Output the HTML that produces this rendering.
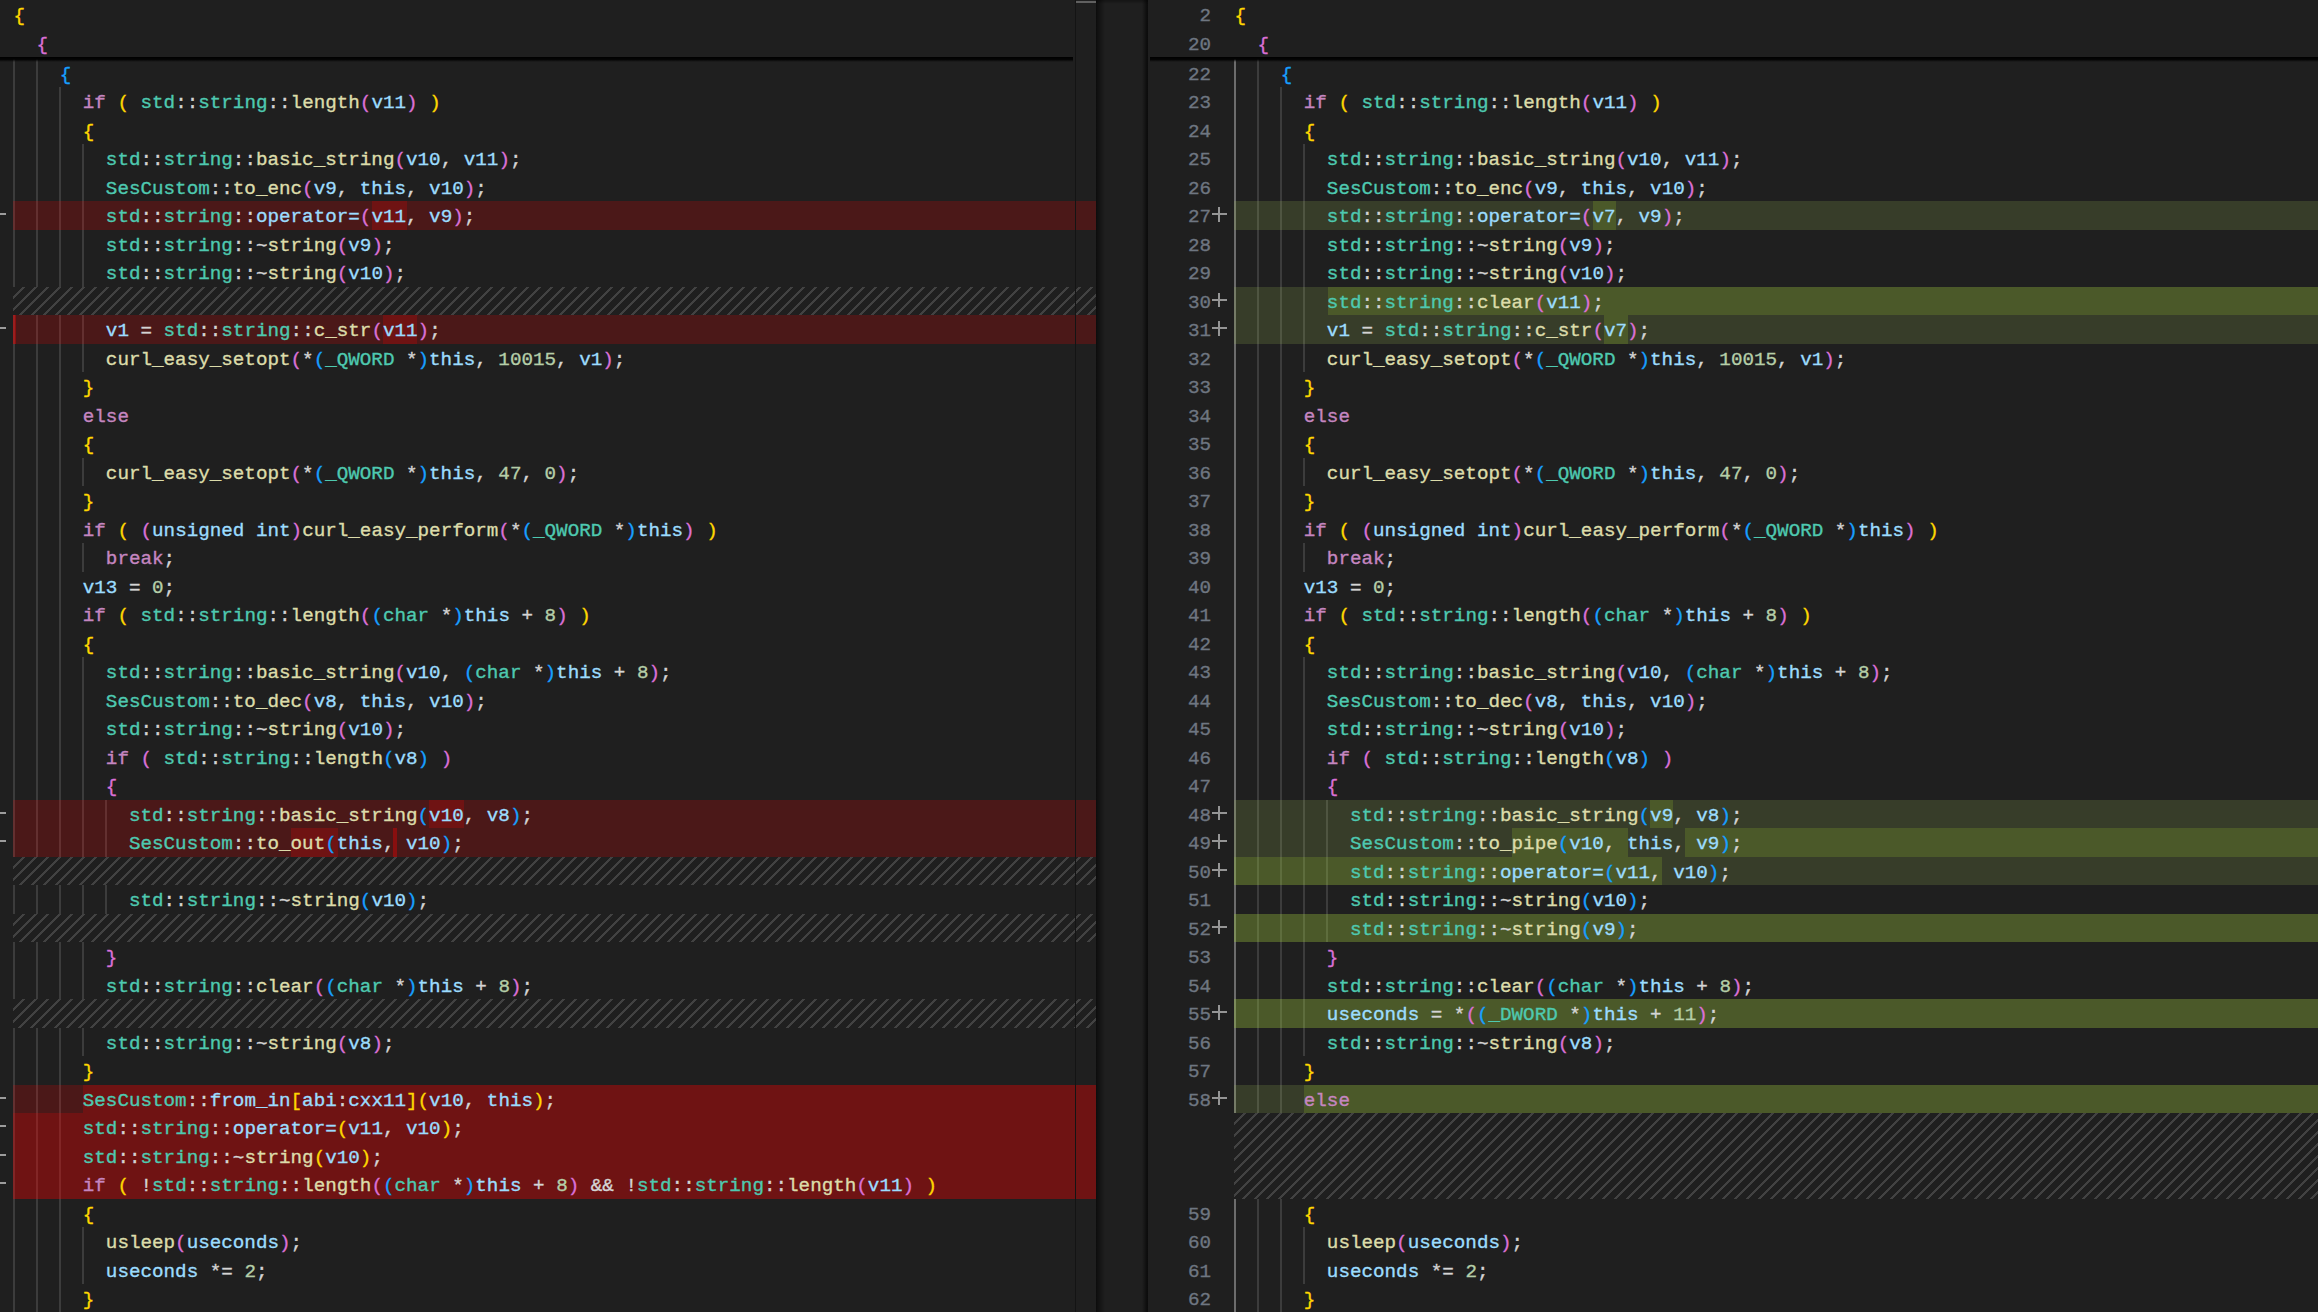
<!DOCTYPE html>
<html><head><meta charset="utf-8"><style>
html,body{margin:0;padding:0;background:#1f1f1f;width:2318px;height:1312px;overflow:hidden;}
body{position:relative;font-family:"Liberation Mono",monospace;}
.g{position:absolute;width:1.5px;height:28.5px;}
.bg{position:absolute;height:28.5px;}
.hatch{position:absolute;height:28.5px;background-image:linear-gradient(-45deg, rgba(204,204,204,0.2) 12.5%, transparent 12.5%, transparent 50%, rgba(204,204,204,0.2) 50%, rgba(204,204,204,0.2) 62.5%, transparent 62.5%, transparent 100%);background-size:12px 12px;}
.ln{position:absolute;height:28.5px;line-height:28.5px;transform:translateY(2px);font-size:19.24px;white-space:pre;color:#D4D4D4;-webkit-text-stroke:0.35px currentColor;}
.num{position:absolute;left:1160px;width:51px;text-align:right;height:28.5px;line-height:28.5px;transform:translateY(2px);font-size:19.24px;color:#6E7681;white-space:pre;-webkit-text-stroke:0.35px currentColor;}
.dash{position:absolute;left:0;width:6px;height:2px;background:#9c9c9c;}
.plus{position:absolute;width:14.5px;height:14.5px;}
.plus .ph{position:absolute;left:0;top:6.2px;width:14.5px;height:2px;background:#959595;}
.plus .pv{position:absolute;left:6.2px;top:0;width:2px;height:14.5px;background:#959595;}
.sticky{position:absolute;top:0;height:57px;background:#1f1f1f;}
.shadow{position:absolute;top:57px;height:5px;background:linear-gradient(#000 0, rgba(0,0,0,0.85) 2.5px, rgba(0,0,0,0) 5px);}
.pane{position:absolute;top:0;height:1312px;overflow:hidden;}
</style></head>
<body>
<div class="pane" style="left:0;width:1096px">
<div class="g" style="left:13.00px;top:58.80px;background:#3c3c3c"></div><div class="g" style="left:36.09px;top:58.80px;background:#3c3c3c"></div><div class="g" style="left:13.00px;top:87.30px;background:#3c3c3c"></div><div class="g" style="left:36.09px;top:87.30px;background:#3c3c3c"></div><div class="g" style="left:59.18px;top:87.30px;background:#3c3c3c"></div><div class="g" style="left:13.00px;top:115.80px;background:#3c3c3c"></div><div class="g" style="left:36.09px;top:115.80px;background:#3c3c3c"></div><div class="g" style="left:59.18px;top:115.80px;background:#3c3c3c"></div><div class="g" style="left:13.00px;top:144.30px;background:#3c3c3c"></div><div class="g" style="left:36.09px;top:144.30px;background:#3c3c3c"></div><div class="g" style="left:59.18px;top:144.30px;background:#3c3c3c"></div><div class="g" style="left:82.28px;top:144.30px;background:#3c3c3c"></div><div class="g" style="left:13.00px;top:172.80px;background:#3c3c3c"></div><div class="g" style="left:36.09px;top:172.80px;background:#3c3c3c"></div><div class="g" style="left:59.18px;top:172.80px;background:#3c3c3c"></div><div class="g" style="left:82.28px;top:172.80px;background:#3c3c3c"></div><div class="g" style="left:13.00px;top:201.30px;background:#3c3c3c"></div><div class="g" style="left:36.09px;top:201.30px;background:#3c3c3c"></div><div class="g" style="left:59.18px;top:201.30px;background:#3c3c3c"></div><div class="g" style="left:82.28px;top:201.30px;background:#3c3c3c"></div><div class="g" style="left:13.00px;top:229.80px;background:#3c3c3c"></div><div class="g" style="left:36.09px;top:229.80px;background:#3c3c3c"></div><div class="g" style="left:59.18px;top:229.80px;background:#3c3c3c"></div><div class="g" style="left:82.28px;top:229.80px;background:#3c3c3c"></div><div class="g" style="left:13.00px;top:258.30px;background:#3c3c3c"></div><div class="g" style="left:36.09px;top:258.30px;background:#3c3c3c"></div><div class="g" style="left:59.18px;top:258.30px;background:#3c3c3c"></div><div class="g" style="left:82.28px;top:258.30px;background:#3c3c3c"></div><div class="g" style="left:13.00px;top:315.30px;background:#3c3c3c"></div><div class="g" style="left:36.09px;top:315.30px;background:#3c3c3c"></div><div class="g" style="left:59.18px;top:315.30px;background:#3c3c3c"></div><div class="g" style="left:82.28px;top:315.30px;background:#3c3c3c"></div><div class="g" style="left:13.00px;top:343.80px;background:#3c3c3c"></div><div class="g" style="left:36.09px;top:343.80px;background:#3c3c3c"></div><div class="g" style="left:59.18px;top:343.80px;background:#3c3c3c"></div><div class="g" style="left:82.28px;top:343.80px;background:#3c3c3c"></div><div class="g" style="left:13.00px;top:372.30px;background:#3c3c3c"></div><div class="g" style="left:36.09px;top:372.30px;background:#3c3c3c"></div><div class="g" style="left:59.18px;top:372.30px;background:#3c3c3c"></div><div class="g" style="left:13.00px;top:400.80px;background:#3c3c3c"></div><div class="g" style="left:36.09px;top:400.80px;background:#3c3c3c"></div><div class="g" style="left:59.18px;top:400.80px;background:#3c3c3c"></div><div class="g" style="left:13.00px;top:429.30px;background:#3c3c3c"></div><div class="g" style="left:36.09px;top:429.30px;background:#3c3c3c"></div><div class="g" style="left:59.18px;top:429.30px;background:#3c3c3c"></div><div class="g" style="left:13.00px;top:457.80px;background:#3c3c3c"></div><div class="g" style="left:36.09px;top:457.80px;background:#3c3c3c"></div><div class="g" style="left:59.18px;top:457.80px;background:#3c3c3c"></div><div class="g" style="left:82.28px;top:457.80px;background:#3c3c3c"></div><div class="g" style="left:13.00px;top:486.30px;background:#3c3c3c"></div><div class="g" style="left:36.09px;top:486.30px;background:#3c3c3c"></div><div class="g" style="left:59.18px;top:486.30px;background:#3c3c3c"></div><div class="g" style="left:13.00px;top:514.80px;background:#3c3c3c"></div><div class="g" style="left:36.09px;top:514.80px;background:#3c3c3c"></div><div class="g" style="left:59.18px;top:514.80px;background:#3c3c3c"></div><div class="g" style="left:13.00px;top:543.30px;background:#3c3c3c"></div><div class="g" style="left:36.09px;top:543.30px;background:#3c3c3c"></div><div class="g" style="left:59.18px;top:543.30px;background:#3c3c3c"></div><div class="g" style="left:82.28px;top:543.30px;background:#3c3c3c"></div><div class="g" style="left:13.00px;top:571.80px;background:#3c3c3c"></div><div class="g" style="left:36.09px;top:571.80px;background:#3c3c3c"></div><div class="g" style="left:59.18px;top:571.80px;background:#3c3c3c"></div><div class="g" style="left:13.00px;top:600.30px;background:#3c3c3c"></div><div class="g" style="left:36.09px;top:600.30px;background:#3c3c3c"></div><div class="g" style="left:59.18px;top:600.30px;background:#3c3c3c"></div><div class="g" style="left:13.00px;top:628.80px;background:#3c3c3c"></div><div class="g" style="left:36.09px;top:628.80px;background:#3c3c3c"></div><div class="g" style="left:59.18px;top:628.80px;background:#3c3c3c"></div><div class="g" style="left:13.00px;top:657.30px;background:#3c3c3c"></div><div class="g" style="left:36.09px;top:657.30px;background:#3c3c3c"></div><div class="g" style="left:59.18px;top:657.30px;background:#3c3c3c"></div><div class="g" style="left:82.28px;top:657.30px;background:#3c3c3c"></div><div class="g" style="left:13.00px;top:685.80px;background:#3c3c3c"></div><div class="g" style="left:36.09px;top:685.80px;background:#3c3c3c"></div><div class="g" style="left:59.18px;top:685.80px;background:#3c3c3c"></div><div class="g" style="left:82.28px;top:685.80px;background:#3c3c3c"></div><div class="g" style="left:13.00px;top:714.30px;background:#3c3c3c"></div><div class="g" style="left:36.09px;top:714.30px;background:#3c3c3c"></div><div class="g" style="left:59.18px;top:714.30px;background:#3c3c3c"></div><div class="g" style="left:82.28px;top:714.30px;background:#3c3c3c"></div><div class="g" style="left:13.00px;top:742.80px;background:#3c3c3c"></div><div class="g" style="left:36.09px;top:742.80px;background:#3c3c3c"></div><div class="g" style="left:59.18px;top:742.80px;background:#3c3c3c"></div><div class="g" style="left:82.28px;top:742.80px;background:#3c3c3c"></div><div class="g" style="left:13.00px;top:771.30px;background:#3c3c3c"></div><div class="g" style="left:36.09px;top:771.30px;background:#3c3c3c"></div><div class="g" style="left:59.18px;top:771.30px;background:#3c3c3c"></div><div class="g" style="left:82.28px;top:771.30px;background:#3c3c3c"></div><div class="g" style="left:13.00px;top:799.80px;background:#3c3c3c"></div><div class="g" style="left:36.09px;top:799.80px;background:#3c3c3c"></div><div class="g" style="left:59.18px;top:799.80px;background:#3c3c3c"></div><div class="g" style="left:82.28px;top:799.80px;background:#3c3c3c"></div><div class="g" style="left:105.37px;top:799.80px;background:#3c3c3c"></div><div class="g" style="left:13.00px;top:828.30px;background:#3c3c3c"></div><div class="g" style="left:36.09px;top:828.30px;background:#3c3c3c"></div><div class="g" style="left:59.18px;top:828.30px;background:#3c3c3c"></div><div class="g" style="left:82.28px;top:828.30px;background:#3c3c3c"></div><div class="g" style="left:105.37px;top:828.30px;background:#3c3c3c"></div><div class="g" style="left:13.00px;top:885.30px;background:#3c3c3c"></div><div class="g" style="left:36.09px;top:885.30px;background:#3c3c3c"></div><div class="g" style="left:59.18px;top:885.30px;background:#3c3c3c"></div><div class="g" style="left:82.28px;top:885.30px;background:#3c3c3c"></div><div class="g" style="left:105.37px;top:885.30px;background:#3c3c3c"></div><div class="g" style="left:13.00px;top:942.30px;background:#3c3c3c"></div><div class="g" style="left:36.09px;top:942.30px;background:#3c3c3c"></div><div class="g" style="left:59.18px;top:942.30px;background:#3c3c3c"></div><div class="g" style="left:82.28px;top:942.30px;background:#3c3c3c"></div><div class="g" style="left:13.00px;top:970.80px;background:#3c3c3c"></div><div class="g" style="left:36.09px;top:970.80px;background:#3c3c3c"></div><div class="g" style="left:59.18px;top:970.80px;background:#3c3c3c"></div><div class="g" style="left:82.28px;top:970.80px;background:#3c3c3c"></div><div class="g" style="left:13.00px;top:1027.80px;background:#3c3c3c"></div><div class="g" style="left:36.09px;top:1027.80px;background:#3c3c3c"></div><div class="g" style="left:59.18px;top:1027.80px;background:#3c3c3c"></div><div class="g" style="left:82.28px;top:1027.80px;background:#3c3c3c"></div><div class="g" style="left:13.00px;top:1056.30px;background:#3c3c3c"></div><div class="g" style="left:36.09px;top:1056.30px;background:#3c3c3c"></div><div class="g" style="left:59.18px;top:1056.30px;background:#3c3c3c"></div><div class="g" style="left:13.00px;top:1084.80px;background:#3c3c3c"></div><div class="g" style="left:36.09px;top:1084.80px;background:#3c3c3c"></div><div class="g" style="left:59.18px;top:1084.80px;background:#3c3c3c"></div><div class="g" style="left:13.00px;top:1113.30px;background:#3c3c3c"></div><div class="g" style="left:36.09px;top:1113.30px;background:#3c3c3c"></div><div class="g" style="left:59.18px;top:1113.30px;background:#3c3c3c"></div><div class="g" style="left:13.00px;top:1141.80px;background:#3c3c3c"></div><div class="g" style="left:36.09px;top:1141.80px;background:#3c3c3c"></div><div class="g" style="left:59.18px;top:1141.80px;background:#3c3c3c"></div><div class="g" style="left:13.00px;top:1170.30px;background:#3c3c3c"></div><div class="g" style="left:36.09px;top:1170.30px;background:#3c3c3c"></div><div class="g" style="left:59.18px;top:1170.30px;background:#3c3c3c"></div><div class="g" style="left:13.00px;top:1198.80px;background:#3c3c3c"></div><div class="g" style="left:36.09px;top:1198.80px;background:#3c3c3c"></div><div class="g" style="left:59.18px;top:1198.80px;background:#3c3c3c"></div><div class="g" style="left:13.00px;top:1227.30px;background:#3c3c3c"></div><div class="g" style="left:36.09px;top:1227.30px;background:#3c3c3c"></div><div class="g" style="left:59.18px;top:1227.30px;background:#3c3c3c"></div><div class="g" style="left:82.28px;top:1227.30px;background:#3c3c3c"></div><div class="g" style="left:13.00px;top:1255.80px;background:#3c3c3c"></div><div class="g" style="left:36.09px;top:1255.80px;background:#3c3c3c"></div><div class="g" style="left:59.18px;top:1255.80px;background:#3c3c3c"></div><div class="g" style="left:82.28px;top:1255.80px;background:#3c3c3c"></div><div class="g" style="left:13.00px;top:1284.30px;background:#3c3c3c"></div><div class="g" style="left:36.09px;top:1284.30px;background:#3c3c3c"></div><div class="g" style="left:59.18px;top:1284.30px;background:#3c3c3c"></div><div class="bg" style="left:13px;top:201.30px;width:1083px;background:rgba(255,0,0,0.2)"></div><div class="bg" style="left:13px;top:315.30px;width:1083px;background:rgba(255,0,0,0.2)"></div><div class="bg" style="left:13px;top:799.80px;width:1083px;background:rgba(255,0,0,0.2)"></div><div class="bg" style="left:13px;top:828.30px;width:1083px;background:rgba(255,0,0,0.2)"></div><div class="bg" style="left:13px;top:1084.80px;width:1083px;background:rgba(255,0,0,0.2)"></div><div class="bg" style="left:13px;top:1113.30px;width:1083px;background:rgba(255,0,0,0.2)"></div><div class="bg" style="left:13px;top:1141.80px;width:1083px;background:rgba(255,0,0,0.2)"></div><div class="bg" style="left:13px;top:1170.30px;width:1083px;background:rgba(255,0,0,0.2)"></div><div class="bg" style="left:372.00px;top:201.30px;width:34.50px;background:rgba(255,0,0,0.2)"></div><div class="bg" style="left:382.50px;top:315.30px;width:34.50px;background:rgba(255,0,0,0.2)"></div><div class="bg" style="left:429.00px;top:799.80px;width:34.50px;background:rgba(255,0,0,0.2)"></div><div class="bg" style="left:291.00px;top:828.30px;width:46.50px;background:rgba(255,0,0,0.2)"></div><div class="bg" style="left:82.50px;top:1084.80px;width:1013.50px;background:rgba(255,0,0,0.2)"></div><div class="bg" style="left:13.00px;top:1113.30px;width:1083.00px;background:rgba(255,0,0,0.2)"></div><div class="bg" style="left:13.00px;top:1141.80px;width:1083.00px;background:rgba(255,0,0,0.2)"></div><div class="bg" style="left:13.00px;top:1170.30px;width:1083.00px;background:rgba(255,0,0,0.2)"></div><div class="bg" style="left:13.00px;top:315.30px;width:2.50px;background:rgba(255,0,0,0.35)"></div><div class="bg" style="left:392.52px;top:828.30px;width:4.00px;background:rgba(255,0,0,0.35)"></div><div class="hatch" style="left:13px;top:286.80px;width:1083px;height:28.50px"></div><div class="hatch" style="left:13px;top:856.80px;width:1083px;height:28.50px"></div><div class="hatch" style="left:13px;top:913.80px;width:1083px;height:28.50px"></div><div class="hatch" style="left:13px;top:999.30px;width:1083px;height:28.50px"></div><div class="ln" style="left:13.50px;top:58.80px">    <span style="color:#179FFF">{</span></div><div class="ln" style="left:13.50px;top:87.30px">      <span style="color:#C586C0">if</span> <span style="color:#FFD700">(</span> <span style="color:#4EC9B0">std</span><span style="color:#D4D4D4">:</span><span style="color:#D4D4D4">:</span><span style="color:#4EC9B0">string</span><span style="color:#D4D4D4">:</span><span style="color:#D4D4D4">:</span><span style="color:#DCDCAA">length</span><span style="color:#DA70D6">(</span><span style="color:#9CDCFE">v11</span><span style="color:#DA70D6">)</span> <span style="color:#FFD700">)</span></div><div class="ln" style="left:13.50px;top:115.80px">      <span style="color:#FFD700">{</span></div><div class="ln" style="left:13.50px;top:144.30px">        <span style="color:#4EC9B0">std</span><span style="color:#D4D4D4">:</span><span style="color:#D4D4D4">:</span><span style="color:#4EC9B0">string</span><span style="color:#D4D4D4">:</span><span style="color:#D4D4D4">:</span><span style="color:#DCDCAA">basic_string</span><span style="color:#DA70D6">(</span><span style="color:#9CDCFE">v10</span><span style="color:#D4D4D4">,</span> <span style="color:#9CDCFE">v11</span><span style="color:#DA70D6">)</span><span style="color:#D4D4D4">;</span></div><div class="ln" style="left:13.50px;top:172.80px">        <span style="color:#4EC9B0">SesCustom</span><span style="color:#D4D4D4">:</span><span style="color:#D4D4D4">:</span><span style="color:#DCDCAA">to_enc</span><span style="color:#DA70D6">(</span><span style="color:#9CDCFE">v9</span><span style="color:#D4D4D4">,</span> <span style="color:#9CDCFE">this</span><span style="color:#D4D4D4">,</span> <span style="color:#9CDCFE">v10</span><span style="color:#DA70D6">)</span><span style="color:#D4D4D4">;</span></div><div class="ln" style="left:13.50px;top:201.30px">        <span style="color:#4EC9B0">std</span><span style="color:#D4D4D4">:</span><span style="color:#D4D4D4">:</span><span style="color:#4EC9B0">string</span><span style="color:#D4D4D4">:</span><span style="color:#D4D4D4">:</span><span style="color:#9CDCFE">operator=</span><span style="color:#DA70D6">(</span><span style="color:#9CDCFE">v11</span><span style="color:#D4D4D4">,</span> <span style="color:#9CDCFE">v9</span><span style="color:#DA70D6">)</span><span style="color:#D4D4D4">;</span></div><div class="ln" style="left:13.50px;top:229.80px">        <span style="color:#4EC9B0">std</span><span style="color:#D4D4D4">:</span><span style="color:#D4D4D4">:</span><span style="color:#4EC9B0">string</span><span style="color:#D4D4D4">:</span><span style="color:#D4D4D4">:</span><span style="color:#D4D4D4">~</span><span style="color:#DCDCAA">string</span><span style="color:#DA70D6">(</span><span style="color:#9CDCFE">v9</span><span style="color:#DA70D6">)</span><span style="color:#D4D4D4">;</span></div><div class="ln" style="left:13.50px;top:258.30px">        <span style="color:#4EC9B0">std</span><span style="color:#D4D4D4">:</span><span style="color:#D4D4D4">:</span><span style="color:#4EC9B0">string</span><span style="color:#D4D4D4">:</span><span style="color:#D4D4D4">:</span><span style="color:#D4D4D4">~</span><span style="color:#DCDCAA">string</span><span style="color:#DA70D6">(</span><span style="color:#9CDCFE">v10</span><span style="color:#DA70D6">)</span><span style="color:#D4D4D4">;</span></div><div class="ln" style="left:13.50px;top:315.30px">        <span style="color:#9CDCFE">v1</span> <span style="color:#D4D4D4">=</span> <span style="color:#4EC9B0">std</span><span style="color:#D4D4D4">:</span><span style="color:#D4D4D4">:</span><span style="color:#4EC9B0">string</span><span style="color:#D4D4D4">:</span><span style="color:#D4D4D4">:</span><span style="color:#DCDCAA">c_str</span><span style="color:#DA70D6">(</span><span style="color:#9CDCFE">v11</span><span style="color:#DA70D6">)</span><span style="color:#D4D4D4">;</span></div><div class="ln" style="left:13.50px;top:343.80px">        <span style="color:#DCDCAA">curl_easy_setopt</span><span style="color:#DA70D6">(</span><span style="color:#D4D4D4">*</span><span style="color:#179FFF">(</span><span style="color:#4EC9B0">_QWORD</span> <span style="color:#D4D4D4">*</span><span style="color:#179FFF">)</span><span style="color:#9CDCFE">this</span><span style="color:#D4D4D4">,</span> <span style="color:#B5CEA8">10015</span><span style="color:#D4D4D4">,</span> <span style="color:#9CDCFE">v1</span><span style="color:#DA70D6">)</span><span style="color:#D4D4D4">;</span></div><div class="ln" style="left:13.50px;top:372.30px">      <span style="color:#FFD700">}</span></div><div class="ln" style="left:13.50px;top:400.80px">      <span style="color:#C586C0">else</span></div><div class="ln" style="left:13.50px;top:429.30px">      <span style="color:#FFD700">{</span></div><div class="ln" style="left:13.50px;top:457.80px">        <span style="color:#DCDCAA">curl_easy_setopt</span><span style="color:#DA70D6">(</span><span style="color:#D4D4D4">*</span><span style="color:#179FFF">(</span><span style="color:#4EC9B0">_QWORD</span> <span style="color:#D4D4D4">*</span><span style="color:#179FFF">)</span><span style="color:#9CDCFE">this</span><span style="color:#D4D4D4">,</span> <span style="color:#B5CEA8">47</span><span style="color:#D4D4D4">,</span> <span style="color:#B5CEA8">0</span><span style="color:#DA70D6">)</span><span style="color:#D4D4D4">;</span></div><div class="ln" style="left:13.50px;top:486.30px">      <span style="color:#FFD700">}</span></div><div class="ln" style="left:13.50px;top:514.80px">      <span style="color:#C586C0">if</span> <span style="color:#FFD700">(</span> <span style="color:#DA70D6">(</span><span style="color:#9CDCFE">unsigned</span> <span style="color:#9CDCFE">int</span><span style="color:#DA70D6">)</span><span style="color:#DCDCAA">curl_easy_perform</span><span style="color:#DA70D6">(</span><span style="color:#D4D4D4">*</span><span style="color:#179FFF">(</span><span style="color:#4EC9B0">_QWORD</span> <span style="color:#D4D4D4">*</span><span style="color:#179FFF">)</span><span style="color:#9CDCFE">this</span><span style="color:#DA70D6">)</span> <span style="color:#FFD700">)</span></div><div class="ln" style="left:13.50px;top:543.30px">        <span style="color:#C586C0">break</span><span style="color:#D4D4D4">;</span></div><div class="ln" style="left:13.50px;top:571.80px">      <span style="color:#9CDCFE">v13</span> <span style="color:#D4D4D4">=</span> <span style="color:#B5CEA8">0</span><span style="color:#D4D4D4">;</span></div><div class="ln" style="left:13.50px;top:600.30px">      <span style="color:#C586C0">if</span> <span style="color:#FFD700">(</span> <span style="color:#4EC9B0">std</span><span style="color:#D4D4D4">:</span><span style="color:#D4D4D4">:</span><span style="color:#4EC9B0">string</span><span style="color:#D4D4D4">:</span><span style="color:#D4D4D4">:</span><span style="color:#DCDCAA">length</span><span style="color:#DA70D6">(</span><span style="color:#179FFF">(</span><span style="color:#4EC9B0">char</span> <span style="color:#D4D4D4">*</span><span style="color:#179FFF">)</span><span style="color:#9CDCFE">this</span> <span style="color:#D4D4D4">+</span> <span style="color:#B5CEA8">8</span><span style="color:#DA70D6">)</span> <span style="color:#FFD700">)</span></div><div class="ln" style="left:13.50px;top:628.80px">      <span style="color:#FFD700">{</span></div><div class="ln" style="left:13.50px;top:657.30px">        <span style="color:#4EC9B0">std</span><span style="color:#D4D4D4">:</span><span style="color:#D4D4D4">:</span><span style="color:#4EC9B0">string</span><span style="color:#D4D4D4">:</span><span style="color:#D4D4D4">:</span><span style="color:#DCDCAA">basic_string</span><span style="color:#DA70D6">(</span><span style="color:#9CDCFE">v10</span><span style="color:#D4D4D4">,</span> <span style="color:#179FFF">(</span><span style="color:#4EC9B0">char</span> <span style="color:#D4D4D4">*</span><span style="color:#179FFF">)</span><span style="color:#9CDCFE">this</span> <span style="color:#D4D4D4">+</span> <span style="color:#B5CEA8">8</span><span style="color:#DA70D6">)</span><span style="color:#D4D4D4">;</span></div><div class="ln" style="left:13.50px;top:685.80px">        <span style="color:#4EC9B0">SesCustom</span><span style="color:#D4D4D4">:</span><span style="color:#D4D4D4">:</span><span style="color:#DCDCAA">to_dec</span><span style="color:#DA70D6">(</span><span style="color:#9CDCFE">v8</span><span style="color:#D4D4D4">,</span> <span style="color:#9CDCFE">this</span><span style="color:#D4D4D4">,</span> <span style="color:#9CDCFE">v10</span><span style="color:#DA70D6">)</span><span style="color:#D4D4D4">;</span></div><div class="ln" style="left:13.50px;top:714.30px">        <span style="color:#4EC9B0">std</span><span style="color:#D4D4D4">:</span><span style="color:#D4D4D4">:</span><span style="color:#4EC9B0">string</span><span style="color:#D4D4D4">:</span><span style="color:#D4D4D4">:</span><span style="color:#D4D4D4">~</span><span style="color:#DCDCAA">string</span><span style="color:#DA70D6">(</span><span style="color:#9CDCFE">v10</span><span style="color:#DA70D6">)</span><span style="color:#D4D4D4">;</span></div><div class="ln" style="left:13.50px;top:742.80px">        <span style="color:#C586C0">if</span> <span style="color:#DA70D6">(</span> <span style="color:#4EC9B0">std</span><span style="color:#D4D4D4">:</span><span style="color:#D4D4D4">:</span><span style="color:#4EC9B0">string</span><span style="color:#D4D4D4">:</span><span style="color:#D4D4D4">:</span><span style="color:#DCDCAA">length</span><span style="color:#179FFF">(</span><span style="color:#9CDCFE">v8</span><span style="color:#179FFF">)</span> <span style="color:#DA70D6">)</span></div><div class="ln" style="left:13.50px;top:771.30px">        <span style="color:#DA70D6">{</span></div><div class="ln" style="left:13.50px;top:799.80px">          <span style="color:#4EC9B0">std</span><span style="color:#D4D4D4">:</span><span style="color:#D4D4D4">:</span><span style="color:#4EC9B0">string</span><span style="color:#D4D4D4">:</span><span style="color:#D4D4D4">:</span><span style="color:#DCDCAA">basic_string</span><span style="color:#179FFF">(</span><span style="color:#9CDCFE">v10</span><span style="color:#D4D4D4">,</span> <span style="color:#9CDCFE">v8</span><span style="color:#179FFF">)</span><span style="color:#D4D4D4">;</span></div><div class="ln" style="left:13.50px;top:828.30px">          <span style="color:#4EC9B0">SesCustom</span><span style="color:#D4D4D4">:</span><span style="color:#D4D4D4">:</span><span style="color:#DCDCAA">to_out</span><span style="color:#179FFF">(</span><span style="color:#9CDCFE">this</span><span style="color:#D4D4D4">,</span> <span style="color:#9CDCFE">v10</span><span style="color:#179FFF">)</span><span style="color:#D4D4D4">;</span></div><div class="ln" style="left:13.50px;top:885.30px">          <span style="color:#4EC9B0">std</span><span style="color:#D4D4D4">:</span><span style="color:#D4D4D4">:</span><span style="color:#4EC9B0">string</span><span style="color:#D4D4D4">:</span><span style="color:#D4D4D4">:</span><span style="color:#D4D4D4">~</span><span style="color:#DCDCAA">string</span><span style="color:#179FFF">(</span><span style="color:#9CDCFE">v10</span><span style="color:#179FFF">)</span><span style="color:#D4D4D4">;</span></div><div class="ln" style="left:13.50px;top:942.30px">        <span style="color:#DA70D6">}</span></div><div class="ln" style="left:13.50px;top:970.80px">        <span style="color:#4EC9B0">std</span><span style="color:#D4D4D4">:</span><span style="color:#D4D4D4">:</span><span style="color:#4EC9B0">string</span><span style="color:#D4D4D4">:</span><span style="color:#D4D4D4">:</span><span style="color:#DCDCAA">clear</span><span style="color:#DA70D6">(</span><span style="color:#179FFF">(</span><span style="color:#4EC9B0">char</span> <span style="color:#D4D4D4">*</span><span style="color:#179FFF">)</span><span style="color:#9CDCFE">this</span> <span style="color:#D4D4D4">+</span> <span style="color:#B5CEA8">8</span><span style="color:#DA70D6">)</span><span style="color:#D4D4D4">;</span></div><div class="ln" style="left:13.50px;top:1027.80px">        <span style="color:#4EC9B0">std</span><span style="color:#D4D4D4">:</span><span style="color:#D4D4D4">:</span><span style="color:#4EC9B0">string</span><span style="color:#D4D4D4">:</span><span style="color:#D4D4D4">:</span><span style="color:#D4D4D4">~</span><span style="color:#DCDCAA">string</span><span style="color:#DA70D6">(</span><span style="color:#9CDCFE">v8</span><span style="color:#DA70D6">)</span><span style="color:#D4D4D4">;</span></div><div class="ln" style="left:13.50px;top:1056.30px">      <span style="color:#FFD700">}</span></div><div class="ln" style="left:13.50px;top:1084.80px">      <span style="color:#4EC9B0">SesCustom</span><span style="color:#D4D4D4">:</span><span style="color:#D4D4D4">:</span><span style="color:#9CDCFE">from_in</span><span style="color:#FFD700">[</span><span style="color:#9CDCFE">abi</span><span style="color:#D4D4D4">:</span><span style="color:#9CDCFE">cxx11</span><span style="color:#FFD700">]</span><span style="color:#FFD700">(</span><span style="color:#9CDCFE">v10</span><span style="color:#D4D4D4">,</span> <span style="color:#9CDCFE">this</span><span style="color:#FFD700">)</span><span style="color:#D4D4D4">;</span></div><div class="ln" style="left:13.50px;top:1113.30px">      <span style="color:#4EC9B0">std</span><span style="color:#D4D4D4">:</span><span style="color:#D4D4D4">:</span><span style="color:#4EC9B0">string</span><span style="color:#D4D4D4">:</span><span style="color:#D4D4D4">:</span><span style="color:#9CDCFE">operator=</span><span style="color:#FFD700">(</span><span style="color:#9CDCFE">v11</span><span style="color:#D4D4D4">,</span> <span style="color:#9CDCFE">v10</span><span style="color:#FFD700">)</span><span style="color:#D4D4D4">;</span></div><div class="ln" style="left:13.50px;top:1141.80px">      <span style="color:#4EC9B0">std</span><span style="color:#D4D4D4">:</span><span style="color:#D4D4D4">:</span><span style="color:#4EC9B0">string</span><span style="color:#D4D4D4">:</span><span style="color:#D4D4D4">:</span><span style="color:#D4D4D4">~</span><span style="color:#DCDCAA">string</span><span style="color:#FFD700">(</span><span style="color:#9CDCFE">v10</span><span style="color:#FFD700">)</span><span style="color:#D4D4D4">;</span></div><div class="ln" style="left:13.50px;top:1170.30px">      <span style="color:#C586C0">if</span> <span style="color:#FFD700">(</span> <span style="color:#D4D4D4">!</span><span style="color:#4EC9B0">std</span><span style="color:#D4D4D4">:</span><span style="color:#D4D4D4">:</span><span style="color:#4EC9B0">string</span><span style="color:#D4D4D4">:</span><span style="color:#D4D4D4">:</span><span style="color:#DCDCAA">length</span><span style="color:#DA70D6">(</span><span style="color:#179FFF">(</span><span style="color:#4EC9B0">char</span> <span style="color:#D4D4D4">*</span><span style="color:#179FFF">)</span><span style="color:#9CDCFE">this</span> <span style="color:#D4D4D4">+</span> <span style="color:#B5CEA8">8</span><span style="color:#DA70D6">)</span> <span style="color:#D4D4D4">&amp;</span><span style="color:#D4D4D4">&amp;</span> <span style="color:#D4D4D4">!</span><span style="color:#4EC9B0">std</span><span style="color:#D4D4D4">:</span><span style="color:#D4D4D4">:</span><span style="color:#4EC9B0">string</span><span style="color:#D4D4D4">:</span><span style="color:#D4D4D4">:</span><span style="color:#DCDCAA">length</span><span style="color:#DA70D6">(</span><span style="color:#9CDCFE">v11</span><span style="color:#DA70D6">)</span> <span style="color:#FFD700">)</span></div><div class="ln" style="left:13.50px;top:1198.80px">      <span style="color:#FFD700">{</span></div><div class="ln" style="left:13.50px;top:1227.30px">        <span style="color:#DCDCAA">usleep</span><span style="color:#DA70D6">(</span><span style="color:#9CDCFE">useconds</span><span style="color:#DA70D6">)</span><span style="color:#D4D4D4">;</span></div><div class="ln" style="left:13.50px;top:1255.80px">        <span style="color:#9CDCFE">useconds</span> <span style="color:#D4D4D4">*</span><span style="color:#D4D4D4">=</span> <span style="color:#B5CEA8">2</span><span style="color:#D4D4D4">;</span></div><div class="ln" style="left:13.50px;top:1284.30px">      <span style="color:#FFD700">}</span></div>
</div>
<div class="pane" style="left:1148px;width:1170px">
<div style="position:absolute;left:-1148px;top:0;width:2318px;height:1312px">
<div class="g" style="left:1234.00px;top:58.80px;background:#6c6c6c"></div><div class="g" style="left:1257.09px;top:58.80px;background:#3c3c3c"></div><div class="g" style="left:1234.00px;top:87.30px;background:#6c6c6c"></div><div class="g" style="left:1257.09px;top:87.30px;background:#3c3c3c"></div><div class="g" style="left:1280.18px;top:87.30px;background:#3c3c3c"></div><div class="g" style="left:1234.00px;top:115.80px;background:#6c6c6c"></div><div class="g" style="left:1257.09px;top:115.80px;background:#3c3c3c"></div><div class="g" style="left:1280.18px;top:115.80px;background:#3c3c3c"></div><div class="g" style="left:1234.00px;top:144.30px;background:#6c6c6c"></div><div class="g" style="left:1257.09px;top:144.30px;background:#3c3c3c"></div><div class="g" style="left:1280.18px;top:144.30px;background:#3c3c3c"></div><div class="g" style="left:1303.28px;top:144.30px;background:#3c3c3c"></div><div class="g" style="left:1234.00px;top:172.80px;background:#6c6c6c"></div><div class="g" style="left:1257.09px;top:172.80px;background:#3c3c3c"></div><div class="g" style="left:1280.18px;top:172.80px;background:#3c3c3c"></div><div class="g" style="left:1303.28px;top:172.80px;background:#3c3c3c"></div><div class="g" style="left:1234.00px;top:201.30px;background:#6c6c6c"></div><div class="g" style="left:1257.09px;top:201.30px;background:#3c3c3c"></div><div class="g" style="left:1280.18px;top:201.30px;background:#3c3c3c"></div><div class="g" style="left:1303.28px;top:201.30px;background:#3c3c3c"></div><div class="g" style="left:1234.00px;top:229.80px;background:#6c6c6c"></div><div class="g" style="left:1257.09px;top:229.80px;background:#3c3c3c"></div><div class="g" style="left:1280.18px;top:229.80px;background:#3c3c3c"></div><div class="g" style="left:1303.28px;top:229.80px;background:#3c3c3c"></div><div class="g" style="left:1234.00px;top:258.30px;background:#6c6c6c"></div><div class="g" style="left:1257.09px;top:258.30px;background:#3c3c3c"></div><div class="g" style="left:1280.18px;top:258.30px;background:#3c3c3c"></div><div class="g" style="left:1303.28px;top:258.30px;background:#3c3c3c"></div><div class="g" style="left:1234.00px;top:286.80px;background:#6c6c6c"></div><div class="g" style="left:1257.09px;top:286.80px;background:#3c3c3c"></div><div class="g" style="left:1280.18px;top:286.80px;background:#3c3c3c"></div><div class="g" style="left:1303.28px;top:286.80px;background:#3c3c3c"></div><div class="g" style="left:1234.00px;top:315.30px;background:#6c6c6c"></div><div class="g" style="left:1257.09px;top:315.30px;background:#3c3c3c"></div><div class="g" style="left:1280.18px;top:315.30px;background:#3c3c3c"></div><div class="g" style="left:1303.28px;top:315.30px;background:#3c3c3c"></div><div class="g" style="left:1234.00px;top:343.80px;background:#6c6c6c"></div><div class="g" style="left:1257.09px;top:343.80px;background:#3c3c3c"></div><div class="g" style="left:1280.18px;top:343.80px;background:#3c3c3c"></div><div class="g" style="left:1303.28px;top:343.80px;background:#3c3c3c"></div><div class="g" style="left:1234.00px;top:372.30px;background:#6c6c6c"></div><div class="g" style="left:1257.09px;top:372.30px;background:#3c3c3c"></div><div class="g" style="left:1280.18px;top:372.30px;background:#3c3c3c"></div><div class="g" style="left:1234.00px;top:400.80px;background:#6c6c6c"></div><div class="g" style="left:1257.09px;top:400.80px;background:#3c3c3c"></div><div class="g" style="left:1280.18px;top:400.80px;background:#3c3c3c"></div><div class="g" style="left:1234.00px;top:429.30px;background:#6c6c6c"></div><div class="g" style="left:1257.09px;top:429.30px;background:#3c3c3c"></div><div class="g" style="left:1280.18px;top:429.30px;background:#3c3c3c"></div><div class="g" style="left:1234.00px;top:457.80px;background:#6c6c6c"></div><div class="g" style="left:1257.09px;top:457.80px;background:#3c3c3c"></div><div class="g" style="left:1280.18px;top:457.80px;background:#3c3c3c"></div><div class="g" style="left:1303.28px;top:457.80px;background:#3c3c3c"></div><div class="g" style="left:1234.00px;top:486.30px;background:#6c6c6c"></div><div class="g" style="left:1257.09px;top:486.30px;background:#3c3c3c"></div><div class="g" style="left:1280.18px;top:486.30px;background:#3c3c3c"></div><div class="g" style="left:1234.00px;top:514.80px;background:#6c6c6c"></div><div class="g" style="left:1257.09px;top:514.80px;background:#3c3c3c"></div><div class="g" style="left:1280.18px;top:514.80px;background:#3c3c3c"></div><div class="g" style="left:1234.00px;top:543.30px;background:#6c6c6c"></div><div class="g" style="left:1257.09px;top:543.30px;background:#3c3c3c"></div><div class="g" style="left:1280.18px;top:543.30px;background:#3c3c3c"></div><div class="g" style="left:1303.28px;top:543.30px;background:#3c3c3c"></div><div class="g" style="left:1234.00px;top:571.80px;background:#6c6c6c"></div><div class="g" style="left:1257.09px;top:571.80px;background:#3c3c3c"></div><div class="g" style="left:1280.18px;top:571.80px;background:#3c3c3c"></div><div class="g" style="left:1234.00px;top:600.30px;background:#6c6c6c"></div><div class="g" style="left:1257.09px;top:600.30px;background:#3c3c3c"></div><div class="g" style="left:1280.18px;top:600.30px;background:#3c3c3c"></div><div class="g" style="left:1234.00px;top:628.80px;background:#6c6c6c"></div><div class="g" style="left:1257.09px;top:628.80px;background:#3c3c3c"></div><div class="g" style="left:1280.18px;top:628.80px;background:#3c3c3c"></div><div class="g" style="left:1234.00px;top:657.30px;background:#6c6c6c"></div><div class="g" style="left:1257.09px;top:657.30px;background:#3c3c3c"></div><div class="g" style="left:1280.18px;top:657.30px;background:#3c3c3c"></div><div class="g" style="left:1303.28px;top:657.30px;background:#3c3c3c"></div><div class="g" style="left:1234.00px;top:685.80px;background:#6c6c6c"></div><div class="g" style="left:1257.09px;top:685.80px;background:#3c3c3c"></div><div class="g" style="left:1280.18px;top:685.80px;background:#3c3c3c"></div><div class="g" style="left:1303.28px;top:685.80px;background:#3c3c3c"></div><div class="g" style="left:1234.00px;top:714.30px;background:#6c6c6c"></div><div class="g" style="left:1257.09px;top:714.30px;background:#3c3c3c"></div><div class="g" style="left:1280.18px;top:714.30px;background:#3c3c3c"></div><div class="g" style="left:1303.28px;top:714.30px;background:#3c3c3c"></div><div class="g" style="left:1234.00px;top:742.80px;background:#6c6c6c"></div><div class="g" style="left:1257.09px;top:742.80px;background:#3c3c3c"></div><div class="g" style="left:1280.18px;top:742.80px;background:#3c3c3c"></div><div class="g" style="left:1303.28px;top:742.80px;background:#3c3c3c"></div><div class="g" style="left:1234.00px;top:771.30px;background:#6c6c6c"></div><div class="g" style="left:1257.09px;top:771.30px;background:#3c3c3c"></div><div class="g" style="left:1280.18px;top:771.30px;background:#3c3c3c"></div><div class="g" style="left:1303.28px;top:771.30px;background:#3c3c3c"></div><div class="g" style="left:1234.00px;top:799.80px;background:#6c6c6c"></div><div class="g" style="left:1257.09px;top:799.80px;background:#3c3c3c"></div><div class="g" style="left:1280.18px;top:799.80px;background:#3c3c3c"></div><div class="g" style="left:1303.28px;top:799.80px;background:#3c3c3c"></div><div class="g" style="left:1326.37px;top:799.80px;background:#3c3c3c"></div><div class="g" style="left:1234.00px;top:828.30px;background:#6c6c6c"></div><div class="g" style="left:1257.09px;top:828.30px;background:#3c3c3c"></div><div class="g" style="left:1280.18px;top:828.30px;background:#3c3c3c"></div><div class="g" style="left:1303.28px;top:828.30px;background:#3c3c3c"></div><div class="g" style="left:1326.37px;top:828.30px;background:#3c3c3c"></div><div class="g" style="left:1234.00px;top:856.80px;background:#6c6c6c"></div><div class="g" style="left:1257.09px;top:856.80px;background:#3c3c3c"></div><div class="g" style="left:1280.18px;top:856.80px;background:#3c3c3c"></div><div class="g" style="left:1303.28px;top:856.80px;background:#3c3c3c"></div><div class="g" style="left:1326.37px;top:856.80px;background:#3c3c3c"></div><div class="g" style="left:1234.00px;top:885.30px;background:#6c6c6c"></div><div class="g" style="left:1257.09px;top:885.30px;background:#3c3c3c"></div><div class="g" style="left:1280.18px;top:885.30px;background:#3c3c3c"></div><div class="g" style="left:1303.28px;top:885.30px;background:#3c3c3c"></div><div class="g" style="left:1326.37px;top:885.30px;background:#3c3c3c"></div><div class="g" style="left:1234.00px;top:913.80px;background:#6c6c6c"></div><div class="g" style="left:1257.09px;top:913.80px;background:#3c3c3c"></div><div class="g" style="left:1280.18px;top:913.80px;background:#3c3c3c"></div><div class="g" style="left:1303.28px;top:913.80px;background:#3c3c3c"></div><div class="g" style="left:1326.37px;top:913.80px;background:#3c3c3c"></div><div class="g" style="left:1234.00px;top:942.30px;background:#6c6c6c"></div><div class="g" style="left:1257.09px;top:942.30px;background:#3c3c3c"></div><div class="g" style="left:1280.18px;top:942.30px;background:#3c3c3c"></div><div class="g" style="left:1303.28px;top:942.30px;background:#3c3c3c"></div><div class="g" style="left:1234.00px;top:970.80px;background:#6c6c6c"></div><div class="g" style="left:1257.09px;top:970.80px;background:#3c3c3c"></div><div class="g" style="left:1280.18px;top:970.80px;background:#3c3c3c"></div><div class="g" style="left:1303.28px;top:970.80px;background:#3c3c3c"></div><div class="g" style="left:1234.00px;top:999.30px;background:#6c6c6c"></div><div class="g" style="left:1257.09px;top:999.30px;background:#3c3c3c"></div><div class="g" style="left:1280.18px;top:999.30px;background:#3c3c3c"></div><div class="g" style="left:1303.28px;top:999.30px;background:#3c3c3c"></div><div class="g" style="left:1234.00px;top:1027.80px;background:#6c6c6c"></div><div class="g" style="left:1257.09px;top:1027.80px;background:#3c3c3c"></div><div class="g" style="left:1280.18px;top:1027.80px;background:#3c3c3c"></div><div class="g" style="left:1303.28px;top:1027.80px;background:#3c3c3c"></div><div class="g" style="left:1234.00px;top:1056.30px;background:#6c6c6c"></div><div class="g" style="left:1257.09px;top:1056.30px;background:#3c3c3c"></div><div class="g" style="left:1280.18px;top:1056.30px;background:#3c3c3c"></div><div class="g" style="left:1234.00px;top:1084.80px;background:#6c6c6c"></div><div class="g" style="left:1257.09px;top:1084.80px;background:#3c3c3c"></div><div class="g" style="left:1280.18px;top:1084.80px;background:#3c3c3c"></div><div class="g" style="left:1234.00px;top:1198.80px;background:#6c6c6c"></div><div class="g" style="left:1257.09px;top:1198.80px;background:#3c3c3c"></div><div class="g" style="left:1280.18px;top:1198.80px;background:#3c3c3c"></div><div class="g" style="left:1234.00px;top:1227.30px;background:#6c6c6c"></div><div class="g" style="left:1257.09px;top:1227.30px;background:#3c3c3c"></div><div class="g" style="left:1280.18px;top:1227.30px;background:#3c3c3c"></div><div class="g" style="left:1303.28px;top:1227.30px;background:#3c3c3c"></div><div class="g" style="left:1234.00px;top:1255.80px;background:#6c6c6c"></div><div class="g" style="left:1257.09px;top:1255.80px;background:#3c3c3c"></div><div class="g" style="left:1280.18px;top:1255.80px;background:#3c3c3c"></div><div class="g" style="left:1303.28px;top:1255.80px;background:#3c3c3c"></div><div class="g" style="left:1234.00px;top:1284.30px;background:#6c6c6c"></div><div class="g" style="left:1257.09px;top:1284.30px;background:#3c3c3c"></div><div class="g" style="left:1280.18px;top:1284.30px;background:#3c3c3c"></div><div class="bg" style="left:1234px;top:201.30px;width:1084px;background:rgba(155,185,85,0.2)"></div><div class="bg" style="left:1234px;top:286.80px;width:1084px;background:rgba(155,185,85,0.2)"></div><div class="bg" style="left:1234px;top:315.30px;width:1084px;background:rgba(155,185,85,0.2)"></div><div class="bg" style="left:1234px;top:799.80px;width:1084px;background:rgba(155,185,85,0.2)"></div><div class="bg" style="left:1234px;top:828.30px;width:1084px;background:rgba(155,185,85,0.2)"></div><div class="bg" style="left:1234px;top:856.80px;width:1084px;background:rgba(155,185,85,0.2)"></div><div class="bg" style="left:1234px;top:913.80px;width:1084px;background:rgba(155,185,85,0.2)"></div><div class="bg" style="left:1234px;top:999.30px;width:1084px;background:rgba(155,185,85,0.2)"></div><div class="bg" style="left:1234px;top:1084.80px;width:1084px;background:rgba(155,185,85,0.2)"></div><div class="bg" style="left:1593.00px;top:201.30px;width:22.50px;background:rgba(156,204,44,0.2)"></div><div class="bg" style="left:1327.50px;top:286.80px;width:990.50px;background:rgba(156,204,44,0.2)"></div><div class="bg" style="left:1603.50px;top:315.30px;width:24.00px;background:rgba(156,204,44,0.2)"></div><div class="bg" style="left:1650.00px;top:799.80px;width:22.50px;background:rgba(156,204,44,0.2)"></div><div class="bg" style="left:1512.00px;top:828.30px;width:115.50px;background:rgba(156,204,44,0.2)"></div><div class="bg" style="left:1684.50px;top:828.30px;width:633.50px;background:rgba(156,204,44,0.2)"></div><div class="bg" style="left:1234.00px;top:856.80px;width:428.00px;background:rgba(156,204,44,0.2)"></div><div class="bg" style="left:1234.00px;top:913.80px;width:1084.00px;background:rgba(156,204,44,0.2)"></div><div class="bg" style="left:1234.00px;top:999.30px;width:1084.00px;background:rgba(156,204,44,0.2)"></div><div class="bg" style="left:1303.50px;top:1084.80px;width:1014.50px;background:rgba(156,204,44,0.2)"></div><div class="hatch" style="left:1234px;top:1113.30px;width:1084px;height:85.50px"></div><div class="ln" style="left:1234.50px;top:58.80px">    <span style="color:#179FFF">{</span></div><div class="ln" style="left:1234.50px;top:87.30px">      <span style="color:#C586C0">if</span> <span style="color:#FFD700">(</span> <span style="color:#4EC9B0">std</span><span style="color:#D4D4D4">:</span><span style="color:#D4D4D4">:</span><span style="color:#4EC9B0">string</span><span style="color:#D4D4D4">:</span><span style="color:#D4D4D4">:</span><span style="color:#DCDCAA">length</span><span style="color:#DA70D6">(</span><span style="color:#9CDCFE">v11</span><span style="color:#DA70D6">)</span> <span style="color:#FFD700">)</span></div><div class="ln" style="left:1234.50px;top:115.80px">      <span style="color:#FFD700">{</span></div><div class="ln" style="left:1234.50px;top:144.30px">        <span style="color:#4EC9B0">std</span><span style="color:#D4D4D4">:</span><span style="color:#D4D4D4">:</span><span style="color:#4EC9B0">string</span><span style="color:#D4D4D4">:</span><span style="color:#D4D4D4">:</span><span style="color:#DCDCAA">basic_string</span><span style="color:#DA70D6">(</span><span style="color:#9CDCFE">v10</span><span style="color:#D4D4D4">,</span> <span style="color:#9CDCFE">v11</span><span style="color:#DA70D6">)</span><span style="color:#D4D4D4">;</span></div><div class="ln" style="left:1234.50px;top:172.80px">        <span style="color:#4EC9B0">SesCustom</span><span style="color:#D4D4D4">:</span><span style="color:#D4D4D4">:</span><span style="color:#DCDCAA">to_enc</span><span style="color:#DA70D6">(</span><span style="color:#9CDCFE">v9</span><span style="color:#D4D4D4">,</span> <span style="color:#9CDCFE">this</span><span style="color:#D4D4D4">,</span> <span style="color:#9CDCFE">v10</span><span style="color:#DA70D6">)</span><span style="color:#D4D4D4">;</span></div><div class="ln" style="left:1234.50px;top:201.30px">        <span style="color:#4EC9B0">std</span><span style="color:#D4D4D4">:</span><span style="color:#D4D4D4">:</span><span style="color:#4EC9B0">string</span><span style="color:#D4D4D4">:</span><span style="color:#D4D4D4">:</span><span style="color:#9CDCFE">operator=</span><span style="color:#DA70D6">(</span><span style="color:#9CDCFE">v7</span><span style="color:#D4D4D4">,</span> <span style="color:#9CDCFE">v9</span><span style="color:#DA70D6">)</span><span style="color:#D4D4D4">;</span></div><div class="ln" style="left:1234.50px;top:229.80px">        <span style="color:#4EC9B0">std</span><span style="color:#D4D4D4">:</span><span style="color:#D4D4D4">:</span><span style="color:#4EC9B0">string</span><span style="color:#D4D4D4">:</span><span style="color:#D4D4D4">:</span><span style="color:#D4D4D4">~</span><span style="color:#DCDCAA">string</span><span style="color:#DA70D6">(</span><span style="color:#9CDCFE">v9</span><span style="color:#DA70D6">)</span><span style="color:#D4D4D4">;</span></div><div class="ln" style="left:1234.50px;top:258.30px">        <span style="color:#4EC9B0">std</span><span style="color:#D4D4D4">:</span><span style="color:#D4D4D4">:</span><span style="color:#4EC9B0">string</span><span style="color:#D4D4D4">:</span><span style="color:#D4D4D4">:</span><span style="color:#D4D4D4">~</span><span style="color:#DCDCAA">string</span><span style="color:#DA70D6">(</span><span style="color:#9CDCFE">v10</span><span style="color:#DA70D6">)</span><span style="color:#D4D4D4">;</span></div><div class="ln" style="left:1234.50px;top:286.80px">        <span style="color:#4EC9B0">std</span><span style="color:#D4D4D4">:</span><span style="color:#D4D4D4">:</span><span style="color:#4EC9B0">string</span><span style="color:#D4D4D4">:</span><span style="color:#D4D4D4">:</span><span style="color:#DCDCAA">clear</span><span style="color:#DA70D6">(</span><span style="color:#9CDCFE">v11</span><span style="color:#DA70D6">)</span><span style="color:#D4D4D4">;</span></div><div class="ln" style="left:1234.50px;top:315.30px">        <span style="color:#9CDCFE">v1</span> <span style="color:#D4D4D4">=</span> <span style="color:#4EC9B0">std</span><span style="color:#D4D4D4">:</span><span style="color:#D4D4D4">:</span><span style="color:#4EC9B0">string</span><span style="color:#D4D4D4">:</span><span style="color:#D4D4D4">:</span><span style="color:#DCDCAA">c_str</span><span style="color:#DA70D6">(</span><span style="color:#9CDCFE">v7</span><span style="color:#DA70D6">)</span><span style="color:#D4D4D4">;</span></div><div class="ln" style="left:1234.50px;top:343.80px">        <span style="color:#DCDCAA">curl_easy_setopt</span><span style="color:#DA70D6">(</span><span style="color:#D4D4D4">*</span><span style="color:#179FFF">(</span><span style="color:#4EC9B0">_QWORD</span> <span style="color:#D4D4D4">*</span><span style="color:#179FFF">)</span><span style="color:#9CDCFE">this</span><span style="color:#D4D4D4">,</span> <span style="color:#B5CEA8">10015</span><span style="color:#D4D4D4">,</span> <span style="color:#9CDCFE">v1</span><span style="color:#DA70D6">)</span><span style="color:#D4D4D4">;</span></div><div class="ln" style="left:1234.50px;top:372.30px">      <span style="color:#FFD700">}</span></div><div class="ln" style="left:1234.50px;top:400.80px">      <span style="color:#C586C0">else</span></div><div class="ln" style="left:1234.50px;top:429.30px">      <span style="color:#FFD700">{</span></div><div class="ln" style="left:1234.50px;top:457.80px">        <span style="color:#DCDCAA">curl_easy_setopt</span><span style="color:#DA70D6">(</span><span style="color:#D4D4D4">*</span><span style="color:#179FFF">(</span><span style="color:#4EC9B0">_QWORD</span> <span style="color:#D4D4D4">*</span><span style="color:#179FFF">)</span><span style="color:#9CDCFE">this</span><span style="color:#D4D4D4">,</span> <span style="color:#B5CEA8">47</span><span style="color:#D4D4D4">,</span> <span style="color:#B5CEA8">0</span><span style="color:#DA70D6">)</span><span style="color:#D4D4D4">;</span></div><div class="ln" style="left:1234.50px;top:486.30px">      <span style="color:#FFD700">}</span></div><div class="ln" style="left:1234.50px;top:514.80px">      <span style="color:#C586C0">if</span> <span style="color:#FFD700">(</span> <span style="color:#DA70D6">(</span><span style="color:#9CDCFE">unsigned</span> <span style="color:#9CDCFE">int</span><span style="color:#DA70D6">)</span><span style="color:#DCDCAA">curl_easy_perform</span><span style="color:#DA70D6">(</span><span style="color:#D4D4D4">*</span><span style="color:#179FFF">(</span><span style="color:#4EC9B0">_QWORD</span> <span style="color:#D4D4D4">*</span><span style="color:#179FFF">)</span><span style="color:#9CDCFE">this</span><span style="color:#DA70D6">)</span> <span style="color:#FFD700">)</span></div><div class="ln" style="left:1234.50px;top:543.30px">        <span style="color:#C586C0">break</span><span style="color:#D4D4D4">;</span></div><div class="ln" style="left:1234.50px;top:571.80px">      <span style="color:#9CDCFE">v13</span> <span style="color:#D4D4D4">=</span> <span style="color:#B5CEA8">0</span><span style="color:#D4D4D4">;</span></div><div class="ln" style="left:1234.50px;top:600.30px">      <span style="color:#C586C0">if</span> <span style="color:#FFD700">(</span> <span style="color:#4EC9B0">std</span><span style="color:#D4D4D4">:</span><span style="color:#D4D4D4">:</span><span style="color:#4EC9B0">string</span><span style="color:#D4D4D4">:</span><span style="color:#D4D4D4">:</span><span style="color:#DCDCAA">length</span><span style="color:#DA70D6">(</span><span style="color:#179FFF">(</span><span style="color:#4EC9B0">char</span> <span style="color:#D4D4D4">*</span><span style="color:#179FFF">)</span><span style="color:#9CDCFE">this</span> <span style="color:#D4D4D4">+</span> <span style="color:#B5CEA8">8</span><span style="color:#DA70D6">)</span> <span style="color:#FFD700">)</span></div><div class="ln" style="left:1234.50px;top:628.80px">      <span style="color:#FFD700">{</span></div><div class="ln" style="left:1234.50px;top:657.30px">        <span style="color:#4EC9B0">std</span><span style="color:#D4D4D4">:</span><span style="color:#D4D4D4">:</span><span style="color:#4EC9B0">string</span><span style="color:#D4D4D4">:</span><span style="color:#D4D4D4">:</span><span style="color:#DCDCAA">basic_string</span><span style="color:#DA70D6">(</span><span style="color:#9CDCFE">v10</span><span style="color:#D4D4D4">,</span> <span style="color:#179FFF">(</span><span style="color:#4EC9B0">char</span> <span style="color:#D4D4D4">*</span><span style="color:#179FFF">)</span><span style="color:#9CDCFE">this</span> <span style="color:#D4D4D4">+</span> <span style="color:#B5CEA8">8</span><span style="color:#DA70D6">)</span><span style="color:#D4D4D4">;</span></div><div class="ln" style="left:1234.50px;top:685.80px">        <span style="color:#4EC9B0">SesCustom</span><span style="color:#D4D4D4">:</span><span style="color:#D4D4D4">:</span><span style="color:#DCDCAA">to_dec</span><span style="color:#DA70D6">(</span><span style="color:#9CDCFE">v8</span><span style="color:#D4D4D4">,</span> <span style="color:#9CDCFE">this</span><span style="color:#D4D4D4">,</span> <span style="color:#9CDCFE">v10</span><span style="color:#DA70D6">)</span><span style="color:#D4D4D4">;</span></div><div class="ln" style="left:1234.50px;top:714.30px">        <span style="color:#4EC9B0">std</span><span style="color:#D4D4D4">:</span><span style="color:#D4D4D4">:</span><span style="color:#4EC9B0">string</span><span style="color:#D4D4D4">:</span><span style="color:#D4D4D4">:</span><span style="color:#D4D4D4">~</span><span style="color:#DCDCAA">string</span><span style="color:#DA70D6">(</span><span style="color:#9CDCFE">v10</span><span style="color:#DA70D6">)</span><span style="color:#D4D4D4">;</span></div><div class="ln" style="left:1234.50px;top:742.80px">        <span style="color:#C586C0">if</span> <span style="color:#DA70D6">(</span> <span style="color:#4EC9B0">std</span><span style="color:#D4D4D4">:</span><span style="color:#D4D4D4">:</span><span style="color:#4EC9B0">string</span><span style="color:#D4D4D4">:</span><span style="color:#D4D4D4">:</span><span style="color:#DCDCAA">length</span><span style="color:#179FFF">(</span><span style="color:#9CDCFE">v8</span><span style="color:#179FFF">)</span> <span style="color:#DA70D6">)</span></div><div class="ln" style="left:1234.50px;top:771.30px">        <span style="color:#DA70D6">{</span></div><div class="ln" style="left:1234.50px;top:799.80px">          <span style="color:#4EC9B0">std</span><span style="color:#D4D4D4">:</span><span style="color:#D4D4D4">:</span><span style="color:#4EC9B0">string</span><span style="color:#D4D4D4">:</span><span style="color:#D4D4D4">:</span><span style="color:#DCDCAA">basic_string</span><span style="color:#179FFF">(</span><span style="color:#9CDCFE">v9</span><span style="color:#D4D4D4">,</span> <span style="color:#9CDCFE">v8</span><span style="color:#179FFF">)</span><span style="color:#D4D4D4">;</span></div><div class="ln" style="left:1234.50px;top:828.30px">          <span style="color:#4EC9B0">SesCustom</span><span style="color:#D4D4D4">:</span><span style="color:#D4D4D4">:</span><span style="color:#DCDCAA">to_pipe</span><span style="color:#179FFF">(</span><span style="color:#9CDCFE">v10</span><span style="color:#D4D4D4">,</span> <span style="color:#9CDCFE">this</span><span style="color:#D4D4D4">,</span> <span style="color:#9CDCFE">v9</span><span style="color:#179FFF">)</span><span style="color:#D4D4D4">;</span></div><div class="ln" style="left:1234.50px;top:856.80px">          <span style="color:#4EC9B0">std</span><span style="color:#D4D4D4">:</span><span style="color:#D4D4D4">:</span><span style="color:#4EC9B0">string</span><span style="color:#D4D4D4">:</span><span style="color:#D4D4D4">:</span><span style="color:#9CDCFE">operator=</span><span style="color:#179FFF">(</span><span style="color:#9CDCFE">v11</span><span style="color:#D4D4D4">,</span> <span style="color:#9CDCFE">v10</span><span style="color:#179FFF">)</span><span style="color:#D4D4D4">;</span></div><div class="ln" style="left:1234.50px;top:885.30px">          <span style="color:#4EC9B0">std</span><span style="color:#D4D4D4">:</span><span style="color:#D4D4D4">:</span><span style="color:#4EC9B0">string</span><span style="color:#D4D4D4">:</span><span style="color:#D4D4D4">:</span><span style="color:#D4D4D4">~</span><span style="color:#DCDCAA">string</span><span style="color:#179FFF">(</span><span style="color:#9CDCFE">v10</span><span style="color:#179FFF">)</span><span style="color:#D4D4D4">;</span></div><div class="ln" style="left:1234.50px;top:913.80px">          <span style="color:#4EC9B0">std</span><span style="color:#D4D4D4">:</span><span style="color:#D4D4D4">:</span><span style="color:#4EC9B0">string</span><span style="color:#D4D4D4">:</span><span style="color:#D4D4D4">:</span><span style="color:#D4D4D4">~</span><span style="color:#DCDCAA">string</span><span style="color:#179FFF">(</span><span style="color:#9CDCFE">v9</span><span style="color:#179FFF">)</span><span style="color:#D4D4D4">;</span></div><div class="ln" style="left:1234.50px;top:942.30px">        <span style="color:#DA70D6">}</span></div><div class="ln" style="left:1234.50px;top:970.80px">        <span style="color:#4EC9B0">std</span><span style="color:#D4D4D4">:</span><span style="color:#D4D4D4">:</span><span style="color:#4EC9B0">string</span><span style="color:#D4D4D4">:</span><span style="color:#D4D4D4">:</span><span style="color:#DCDCAA">clear</span><span style="color:#DA70D6">(</span><span style="color:#179FFF">(</span><span style="color:#4EC9B0">char</span> <span style="color:#D4D4D4">*</span><span style="color:#179FFF">)</span><span style="color:#9CDCFE">this</span> <span style="color:#D4D4D4">+</span> <span style="color:#B5CEA8">8</span><span style="color:#DA70D6">)</span><span style="color:#D4D4D4">;</span></div><div class="ln" style="left:1234.50px;top:999.30px">        <span style="color:#9CDCFE">useconds</span> <span style="color:#D4D4D4">=</span> <span style="color:#D4D4D4">*</span><span style="color:#DA70D6">(</span><span style="color:#179FFF">(</span><span style="color:#4EC9B0">_DWORD</span> <span style="color:#D4D4D4">*</span><span style="color:#179FFF">)</span><span style="color:#9CDCFE">this</span> <span style="color:#D4D4D4">+</span> <span style="color:#B5CEA8">11</span><span style="color:#DA70D6">)</span><span style="color:#D4D4D4">;</span></div><div class="ln" style="left:1234.50px;top:1027.80px">        <span style="color:#4EC9B0">std</span><span style="color:#D4D4D4">:</span><span style="color:#D4D4D4">:</span><span style="color:#4EC9B0">string</span><span style="color:#D4D4D4">:</span><span style="color:#D4D4D4">:</span><span style="color:#D4D4D4">~</span><span style="color:#DCDCAA">string</span><span style="color:#DA70D6">(</span><span style="color:#9CDCFE">v8</span><span style="color:#DA70D6">)</span><span style="color:#D4D4D4">;</span></div><div class="ln" style="left:1234.50px;top:1056.30px">      <span style="color:#FFD700">}</span></div><div class="ln" style="left:1234.50px;top:1084.80px">      <span style="color:#C586C0">else</span></div><div class="ln" style="left:1234.50px;top:1198.80px">      <span style="color:#FFD700">{</span></div><div class="ln" style="left:1234.50px;top:1227.30px">        <span style="color:#DCDCAA">usleep</span><span style="color:#DA70D6">(</span><span style="color:#9CDCFE">useconds</span><span style="color:#DA70D6">)</span><span style="color:#D4D4D4">;</span></div><div class="ln" style="left:1234.50px;top:1255.80px">        <span style="color:#9CDCFE">useconds</span> <span style="color:#D4D4D4">*</span><span style="color:#D4D4D4">=</span> <span style="color:#B5CEA8">2</span><span style="color:#D4D4D4">;</span></div><div class="ln" style="left:1234.50px;top:1284.30px">      <span style="color:#FFD700">}</span></div>
</div>
</div>
<div class="dash" style="top:1096.55px"></div><div class="dash" style="top:1125.05px"></div><div class="dash" style="top:1153.55px"></div><div class="dash" style="top:1182.05px"></div><div class="dash" style="top:213.05px"></div><div class="dash" style="top:327.05px"></div><div class="dash" style="top:811.55px"></div><div class="dash" style="top:840.05px"></div><div class="plus" style="left:1212px;top:919.75px"><div class="ph"></div><div class="pv"></div></div><div class="plus" style="left:1212px;top:1005.25px"><div class="ph"></div><div class="pv"></div></div><div class="plus" style="left:1212px;top:1090.75px"><div class="ph"></div><div class="pv"></div></div><div class="plus" style="left:1212px;top:207.25px"><div class="ph"></div><div class="pv"></div></div><div class="plus" style="left:1212px;top:292.75px"><div class="ph"></div><div class="pv"></div></div><div class="plus" style="left:1212px;top:321.25px"><div class="ph"></div><div class="pv"></div></div><div class="plus" style="left:1212px;top:805.75px"><div class="ph"></div><div class="pv"></div></div><div class="plus" style="left:1212px;top:834.25px"><div class="ph"></div><div class="pv"></div></div><div class="plus" style="left:1212px;top:862.75px"><div class="ph"></div><div class="pv"></div></div><div class="num" style="top:58.80px">22</div><div class="num" style="top:87.30px">23</div><div class="num" style="top:115.80px">24</div><div class="num" style="top:144.30px">25</div><div class="num" style="top:172.80px">26</div><div class="num" style="top:201.30px">27</div><div class="num" style="top:229.80px">28</div><div class="num" style="top:258.30px">29</div><div class="num" style="top:286.80px">30</div><div class="num" style="top:315.30px">31</div><div class="num" style="top:343.80px">32</div><div class="num" style="top:372.30px">33</div><div class="num" style="top:400.80px">34</div><div class="num" style="top:429.30px">35</div><div class="num" style="top:457.80px">36</div><div class="num" style="top:486.30px">37</div><div class="num" style="top:514.80px">38</div><div class="num" style="top:543.30px">39</div><div class="num" style="top:571.80px">40</div><div class="num" style="top:600.30px">41</div><div class="num" style="top:628.80px">42</div><div class="num" style="top:657.30px">43</div><div class="num" style="top:685.80px">44</div><div class="num" style="top:714.30px">45</div><div class="num" style="top:742.80px">46</div><div class="num" style="top:771.30px">47</div><div class="num" style="top:799.80px">48</div><div class="num" style="top:828.30px">49</div><div class="num" style="top:856.80px">50</div><div class="num" style="top:885.30px">51</div><div class="num" style="top:913.80px">52</div><div class="num" style="top:942.30px">53</div><div class="num" style="top:970.80px">54</div><div class="num" style="top:999.30px">55</div><div class="num" style="top:1027.80px">56</div><div class="num" style="top:1056.30px">57</div><div class="num" style="top:1084.80px">58</div><div class="num" style="top:1198.80px">59</div><div class="num" style="top:1227.30px">60</div><div class="num" style="top:1255.80px">61</div><div class="num" style="top:1284.30px">62</div>
<div class="sticky" style="left:0;width:1073px"></div><div class="shadow" style="left:0;width:1073px"></div><div class="sticky" style="left:1150px;width:1168px"></div><div class="shadow" style="left:1150px;width:1168px"></div><div class="ln" style="left:13.5px;top:0.00px"><span style="color:#FFD700">{</span></div><div class="ln" style="left:1234.5px;top:0.00px"><span style="color:#FFD700">{</span></div><div class="num" style="top:0.00px">2</div><div class="ln" style="left:13.5px;top:28.50px">  <span style="color:#DA70D6">{</span></div><div class="ln" style="left:1234.5px;top:28.50px">  <span style="color:#DA70D6">{</span></div><div class="num" style="top:28.50px">20</div>
<div style="position:absolute;left:1075px;top:0;width:1px;height:1312px;background:#141414"></div><div style="position:absolute;left:1076px;top:1px;width:20px;height:2px;background:#606060"></div><div style="position:absolute;left:1096px;top:0;width:52px;height:1312px;background:#1f1f1f;background-image:linear-gradient(to right, rgba(0,0,0,0.6), rgba(0,0,0,0) 9px), linear-gradient(to left, rgba(0,0,0,0.6) 1px, rgba(0,0,0,0) 6px)"></div><div style="position:absolute;left:1096px;top:0;width:52px;height:4px;background:linear-gradient(rgba(0,0,0,0.35),rgba(0,0,0,0))"></div>
</body></html>
